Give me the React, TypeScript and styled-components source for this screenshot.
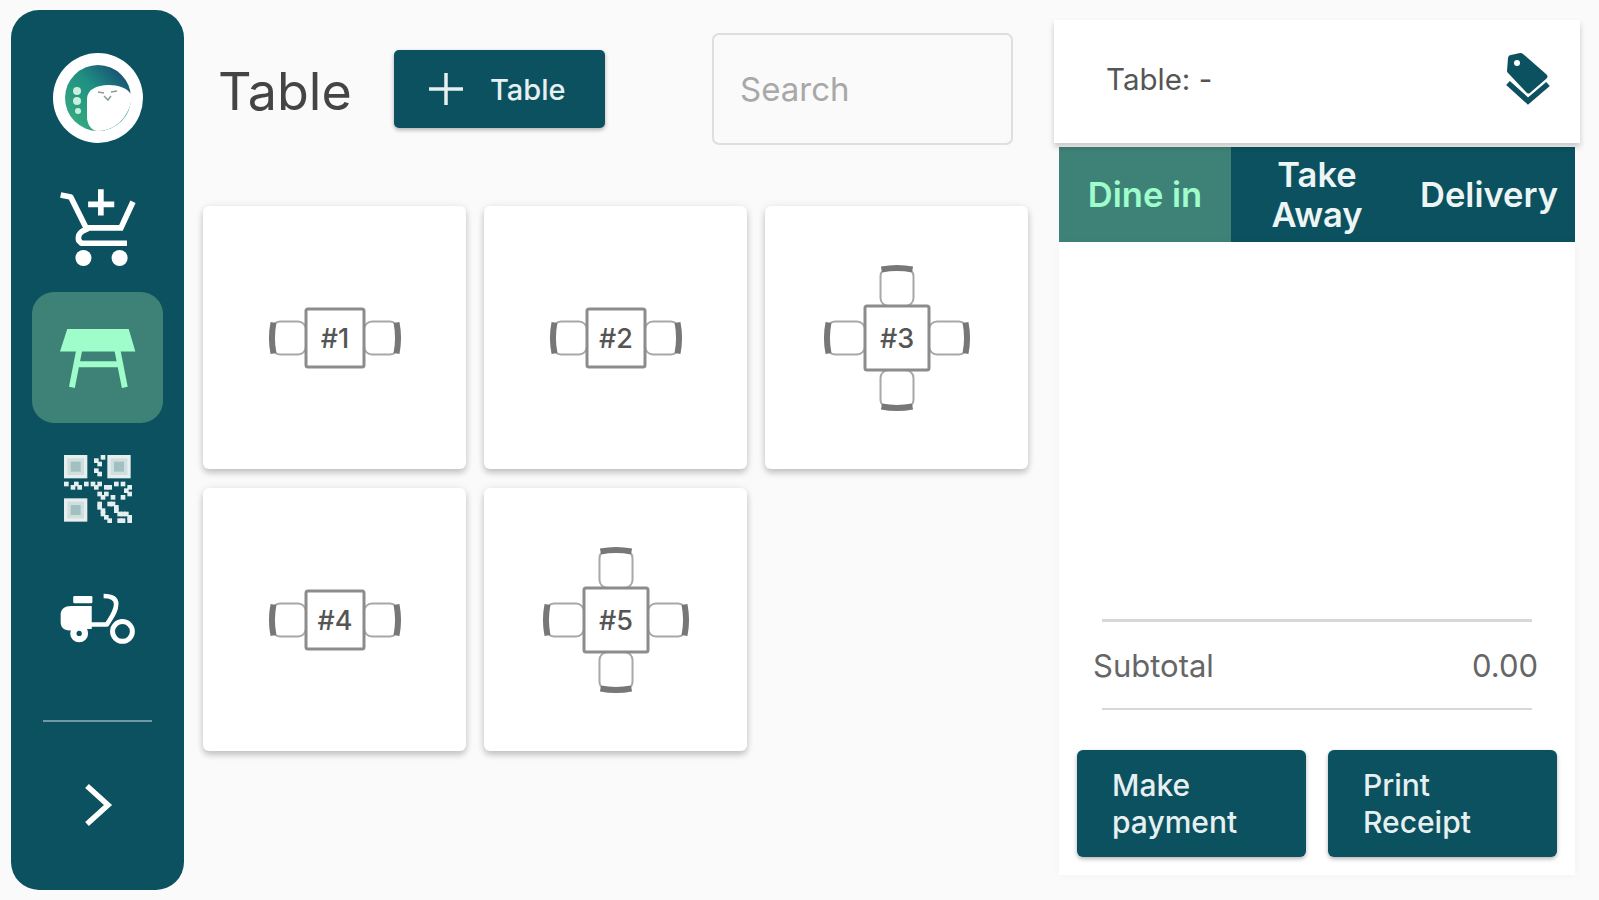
import styled, { createGlobalStyle } from "styled-components";

const TEAL = "#0c5160";
const TEAL_SOFT = "#3e8277";
const MINT = "#9ffccb";

const tables = [
  { id: 1, seats: 2 },
  { id: 2, seats: 2 },
  { id: 3, seats: 4 },
  { id: 4, seats: 2 },
  { id: 5, seats: 4 },
];

function LogoMark() {
  return (
    <svg width="66" height="66" viewBox="0 0 66 66">
      <defs>
        <linearGradient id="logoFill" x1="0" y1="1" x2="1" y2="0">
          <stop offset="0" stopColor="#3ab27f" />
          <stop offset="0.55" stopColor="#1f8f83" />
          <stop offset="1" stopColor="#163a6b" />
        </linearGradient>
      </defs>
      <circle cx="33" cy="33" r="33" fill="url(#logoFill)" />
      <path d="M22 34c0-9 9-14 22-14 9 0 18 3 22 9v8C63 52 50 66 33 66c-6 0-11-6-11-14z" fill="#fff" />
      <path d="M33 27l6 1M46 27l6-1M39 31l4 4 3-4" stroke="#8a9aa0" strokeWidth="1.5" fill="none" />
      <circle cx="12" cy="26" r="4" fill="#c9efdd" />
      <circle cx="12" cy="36" r="4" fill="#c9efdd" />
      <circle cx="13" cy="46" r="3" fill="#c9efdd" />
    </svg>
  );
}

function CartIcon() {
  return (
    <svg width="77" height="82" viewBox="165 555 230 245" fill="none" stroke="#fff" strokeWidth="17">
      <path d="M170 582l30 6 48 96c-22 8-28 18-24 34l8 8h136" strokeLinejoin="round" />
      <path d="M248 680h102l36-78" />
      <path d="M290 565v78M252 610h78" />
      <circle cx="238" cy="770" r="24" fill="#fff" stroke="none" />
      <circle cx="346" cy="770" r="24" fill="#fff" stroke="none" />
    </svg>
  );
}

function TableNavIcon() {
  return (
    <svg width="76" height="62" viewBox="178 980 230 186" fill="none" stroke={MINT} strokeWidth="18">
      <path d="M200 985h186l20 68H178z" fill={MINT} stroke="none" />
      <path d="M236 1050l-22 112M352 1050l22 112M228 1092h132" />
    </svg>
  );
}

function QrIcon() {
  const cells = [
    [9, 1], [10, 2], [9, 4], [11, 0], [10, 5],
    [0, 8], [2, 9], [3, 8], [4, 9], [6, 8], [8, 8], [9, 9], [10, 8], [12, 9], [13, 9], [15, 8], [17, 8], [19, 9],
    [18, 10], [19, 11], [17, 12], [10, 11], [11, 12], [12, 11], [14, 12],
    [10, 14], [10, 15], [11, 16], [11, 17], [12, 18], [13, 14], [14, 14], [15, 15], [15, 16], [16, 17], [17, 17], [18, 17], [19, 18], [19, 19], [16, 19], [17, 19], [13, 19],
  ];
  const finders = [[0, 0], [13, 0], [0, 13]];
  return (
    <svg width="68" height="68" viewBox="0 0 20.4 20.4">
      {finders.map(([x, y]) => (
        <g key={`${x}-${y}`}>
          <rect x={x} y={y} width="7" height="7" fill="#e6eeee" />
          <rect x={x + 1} y={y + 1} width="5" height="5" fill="#cfdfdf" />
          <rect x={x + 2} y={y + 2} width="3" height="3" fill="#a3c0c0" />
        </g>
      ))}
      {cells.map(([x, y]) => (
        <rect key={`${x}:${y}`} x={x} y={y} width="1.4" height="1.4" fill="#e6efef" />
      ))}
    </svg>
  );
}

function ScooterIcon() {
  return (
    <svg width="76" height="56" viewBox="178 425 230 165" fill="none">
      <rect x="218" y="435" width="58" height="22" rx="4" fill="#fff" />
      <path d="M270 521h50c14-22 28-40 28-62 0-16-14-24-38-24" stroke="#fff" strokeWidth="14" strokeLinejoin="round" />
      <path d="M180 490c0-15 12-25 32-25h62v70h-50c-24 10-44 0-44-20z" fill="#fff" />
      <circle cx="236" cy="548" r="27" fill="#fff" />
      <circle cx="236" cy="548" r="8" fill={TEAL} />
      <circle cx="367" cy="542" r="30" stroke="#fff" strokeWidth="15" fill={TEAL} />
    </svg>
  );
}

function ChevronIcon() {
  return (
    <svg width="32" height="46" viewBox="0 0 32 46" fill="none" stroke="#fff" strokeWidth="5.5">
      <path d="M5 4l21 19L5 42" />
    </svg>
  );
}

function PlusIcon() {
  return (
    <svg width="36" height="34" viewBox="0 0 36 34" stroke="#e6f0f0" strokeWidth="3.5">
      <path d="M18 1v32M1 17h34" />
    </svg>
  );
}

function TagsIcon() {
  return (
    <svg width="44" height="53" viewBox="0 0 44 53" fill="none">
      <path d="M5 3l9-2c1 0 2 0 3 1l23 20c2 2 2 3 0 5L25 40c-2 2-3 2-5 0L3 22c-1-1-2-2-2-3l1-13c0-1 1-3 3-3z" fill={TEAL} />
      <circle cx="11" cy="11" r="3" fill="#fff" />
      <path d="M2 31l20 18 20-17" stroke={TEAL} strokeWidth="5.5" />
    </svg>
  );
}

function SeatedTable({ id, seats }: { id: number; seats: number }) {
  const half = seats === 4 ? 32 : 29;
  const chairLength = seats === 4 ? 38 : 34;
  const sideChair = (
    <g>
      <rect x={-chairLength} y="-16.5" width={chairLength} height="33" rx="8" fill="#fff" stroke="#a8a8a8" strokeWidth="2" />
      <path d={`M${1.5 - chairLength} -15.5c-2 10-2 21 0 31`} stroke="#777" strokeWidth="6" fill="none" />
    </g>
  );
  const angles = seats === 4 ? [0, 90, 180, 270] : [0, 180];
  return (
    <TableGlyph width="150" height="150" viewBox="-75 -75 150 150">
      {angles.map((angle) => (
        <g key={angle} transform={`rotate(${angle}) translate(${-half} 0)`}>
          {sideChair}
        </g>
      ))}
      <rect x={-half} y={-half} width={half * 2} height={half * 2} rx="2" fill="#fff" stroke="#8c8c8c" strokeWidth="3" />
      <text x="0" y="9.5" textAnchor="middle">
        #{id}
      </text>
    </TableGlyph>
  );
}

export default function App() {
  return (
    <>
      <GlobalStyle />
      <Page>
        <Sidebar>
          <Avatar>
            <LogoMark />
          </Avatar>
          <NavItem>
            <CartIcon />
          </NavItem>
          <NavItem $active>
            <TableNavIcon />
          </NavItem>
          <NavItem>
            <QrIcon />
          </NavItem>
          <NavItem>
            <ScooterIcon />
          </NavItem>
          <SideDivider />
          <ExpandButton>
            <ChevronIcon />
          </ExpandButton>
        </Sidebar>

        <Main>
          <Toolbar>
            <Title>Table</Title>
            <AddButton>
              <PlusIcon />
              Table
            </AddButton>
            <SearchInput placeholder="Search" />
          </Toolbar>
          <TableGrid>
            {tables.map((table) => (
              <TableCard key={table.id}>
                <SeatedTable id={table.id} seats={table.seats} />
              </TableCard>
            ))}
          </TableGrid>
        </Main>

        <OrderPanel>
          <OrderHeader>
            <span>Table: -</span>
            <TagsIcon />
          </OrderHeader>
          <Tabs>
            <Tab $active>Dine in</Tab>
            <Tab>
              Take
              <br />
              Away
            </Tab>
            <Tab>Delivery</Tab>
          </Tabs>
          <OrderBody>
            <Rule $thick />
            <SubtotalRow>
              <span>Subtotal</span>
              <span>0.00</span>
            </SubtotalRow>
            <Rule />
            <Actions>
              <ActionButton>
                Make
                <br />
                payment
              </ActionButton>
              <ActionButton>
                Print
                <br />
                Receipt
              </ActionButton>
            </Actions>
          </OrderBody>
        </OrderPanel>
      </Page>
    </>
  );
}

const GlobalStyle = createGlobalStyle`
  html, body {
    margin: 0;
    height: 100%;
    overflow: hidden;
    background: #fafafa;
    font-family: Inter, Roboto, sans-serif;
  }
`;

const Page = styled.div`
  display: grid;
  grid-template-columns: 173px 1fr 526px;
  height: 900px;
  box-sizing: border-box;
  padding: 10px 19px 10px 11px;
`;

const Sidebar = styled.nav`
  display: flex;
  flex-direction: column;
  align-items: center;
  padding-top: 43px;
  background: ${TEAL};
  border-radius: 28px;
`;

const Avatar = styled.div`
  display: flex;
  align-items: center;
  justify-content: center;
  width: 90px;
  height: 90px;
  margin-bottom: 18px;
  background: #fff;
  border-radius: 50%;
`;

const NavItem = styled.div<{ $active?: boolean }>`
  display: flex;
  align-items: center;
  justify-content: center;
  flex-shrink: 0;
  width: 131px;
  height: 131px;
  border-radius: 22px;
  background: ${(p) => (p.$active ? TEAL_SOFT : "transparent")};
`;

const SideDivider = styled.div`
  width: 109px;
  height: 2px;
  margin: 35px 0 60px;
  background: #6f9aa3;
`;

const ExpandButton = styled.div`
  display: flex;
`;

const Main = styled.main`
  padding: 23px 0 0 19px;
`;

const Toolbar = styled.div`
  display: flex;
  align-items: center;
  height: 112px;
  margin-bottom: 61px;
  padding-left: 15px;
`;

const Title = styled.h1`
  width: 176px;
  margin: 0;
  padding-top: 5px;
  color: #444;
  font-size: 52px;
  font-weight: 400;
`;

const AddButton = styled.button`
  display: flex;
  align-items: center;
  gap: 26px;
  width: 211px;
  height: 78px;
  padding: 0 0 0 34px;
  border: 0;
  border-radius: 5px;
  background: ${TEAL};
  box-shadow: 0 2px 4px rgba(0, 0, 0, 0.3);
  color: #e6f0f0;
  font-family: inherit;
  font-size: 29px;
  font-weight: 500;
`;

const SearchInput = styled.input`
  box-sizing: border-box;
  width: 301px;
  height: 112px;
  margin-left: 107px;
  padding: 0 26px;
  border: 2px solid #dedede;
  border-radius: 7px;
  background: #fafafa;
  font-family: inherit;
  font-size: 33px;

  &::placeholder {
    color: #a8a8a8;
  }
`;

const TableGrid = styled.div`
  display: grid;
  grid-template-columns: repeat(3, 263px);
  grid-auto-rows: 263px;
  gap: 19px 18px;
`;

const TableCard = styled.div`
  display: flex;
  align-items: center;
  justify-content: center;
  background: #fff;
  border-radius: 6px;
  box-shadow: 0 4px 6px rgba(0, 0, 0, 0.2), 0 0 10px rgba(0, 0, 0, 0.07);
`;

const TableGlyph = styled.svg`
  font-family: Inter, sans-serif;
  font-size: 27px;
  font-weight: 500;
  fill: #555;
`;

const OrderPanel = styled.aside`
  display: flex;
  flex-direction: column;
  margin: 10px 0 15px;
`;

const OrderHeader = styled.header`
  position: relative;
  z-index: 1;
  display: flex;
  align-items: center;
  justify-content: space-between;
  flex-shrink: 0;
  box-sizing: border-box;
  height: 123px;
  padding: 0 30px 6px 52px;
  background: #fff;
  box-shadow: 0 4px 6px rgba(0, 0, 0, 0.2);
  color: #555;
  font-size: 29.5px;
`;

const Tabs = styled.div`
  display: grid;
  grid-template-columns: repeat(3, 1fr);
  height: 95px;
  margin: 4px 5px 0;
  flex-shrink: 0;
  background: ${TEAL};
`;

const Tab = styled.div<{ $active?: boolean }>`
  display: flex;
  align-items: center;
  justify-content: center;
  background: ${(p) => (p.$active ? TEAL_SOFT : "transparent")};
  color: ${(p) => (p.$active ? MINT : "#eef5f5")};
  font-size: 34.5px;
  font-weight: 600;
  line-height: 40px;
  text-align: center;
`;

const OrderBody = styled.section`
  display: flex;
  flex: 1;
  flex-direction: column;
  justify-content: flex-end;
  margin: 0 5px;
  padding: 0 18px 18px;
  background: #fff;
  box-shadow: 0 0 8px rgba(0, 0, 0, 0.04);
`;

const Rule = styled.div<{ $thick?: boolean }>`
  height: ${(p) => (p.$thick ? 3 : 2)}px;
  margin: 0 25px;
  background: #d8d8d8;
`;

const SubtotalRow = styled.div`
  display: flex;
  align-items: center;
  justify-content: space-between;
  height: 86px;
  padding: 0 19px 0 16px;
  color: #666;
  font-size: 31px;
`;

const Actions = styled.div`
  display: grid;
  grid-template-columns: 229px 229px;
  justify-content: space-between;
  margin-top: 40px;
`;

const ActionButton = styled.button`
  height: 107px;
  padding: 0 0 0 35px;
  border: 0;
  border-radius: 6px;
  background: ${TEAL};
  box-shadow: 0 2px 4px rgba(0, 0, 0, 0.3);
  color: #e6f0f0;
  font-family: inherit;
  font-size: 30px;
  font-weight: 500;
  line-height: 37px;
  text-align: left;
`;
